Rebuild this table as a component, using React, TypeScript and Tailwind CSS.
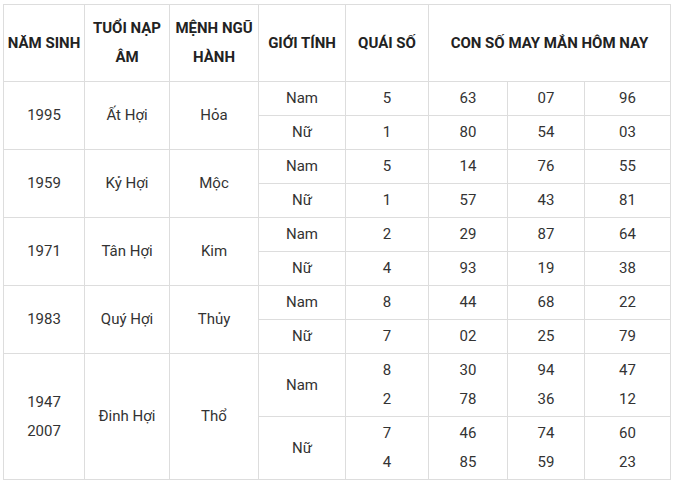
import React from "react";

type Row = { g: string; q: string[]; n: string[][] };
type Group = { year: string[]; tuoi: string; menh: string; rows: Row[]; tall?: boolean };

const data: Group[] = [
  { year: ["1995"], tuoi: "Ất Hợi", menh: "Hỏa", rows: [
    { g: "Nam", q: ["5"], n: [["63"], ["07"], ["96"]] },
    { g: "Nữ", q: ["1"], n: [["80"], ["54"], ["03"]] },
  ] },
  { year: ["1959"], tuoi: "Kỷ Hợi", menh: "Mộc", rows: [
    { g: "Nam", q: ["5"], n: [["14"], ["76"], ["55"]] },
    { g: "Nữ", q: ["1"], n: [["57"], ["43"], ["81"]] },
  ] },
  { year: ["1971"], tuoi: "Tân Hợi", menh: "Kim", rows: [
    { g: "Nam", q: ["2"], n: [["29"], ["87"], ["64"]] },
    { g: "Nữ", q: ["4"], n: [["93"], ["19"], ["38"]] },
  ] },
  { year: ["1983"], tuoi: "Quý Hợi", menh: "Thủy", rows: [
    { g: "Nam", q: ["8"], n: [["44"], ["68"], ["22"]] },
    { g: "Nữ", q: ["7"], n: [["02"], ["25"], ["79"]] },
  ] },
  { year: ["1947", "2007"], tuoi: "Đinh Hợi", menh: "Thổ", tall: true, rows: [
    { g: "Nam", q: ["8", "2"], n: [["30", "78"], ["94", "36"], ["47", "12"]] },
    { g: "Nữ", q: ["7", "4"], n: [["46", "85"], ["74", "59"], ["60", "23"]] },
  ] },
];

const td = "border border-[#dddddd] text-center align-middle p-0";

function Lines({ items }: { items: string[] }) {
  return (
    <div className="flex flex-col items-center leading-[29px]">
      {items.map((t, i) => (
        <span key={i}>{t}</span>
      ))}
    </div>
  );
}

export default function App() {
  return (
    <div className="w-[680px] h-[487px] bg-white pt-[4px] pl-[3px]" style={{ fontFamily: "Roboto, 'Liberation Sans', sans-serif" }}>
      <table className="border-collapse table-fixed w-[667px] text-[15px] text-[#333333]">
        <colgroup>
          <col className="w-[81px]" />
          <col className="w-[85px]" />
          <col className="w-[89px]" />
          <col className="w-[87px]" />
          <col className="w-[83px]" />
          <col className="w-[79px]" />
          <col className="w-[77px]" />
          <col className="w-[86px]" />
        </colgroup>
        <thead>
          <tr className="h-[77px]">
            <th className={`${td} font-bold leading-[29px] text-[#222222]`}>NĂM SINH</th>
            <th className={`${td} font-bold leading-[29px] text-[#222222]`}>TUỔI NẠP<br />ÂM</th>
            <th className={`${td} font-bold leading-[29px] text-[#222222]`}>MỆNH NGŨ<br />HÀNH</th>
            <th className={`${td} font-bold leading-[29px] text-[#222222]`}>GIỚI TÍNH</th>
            <th className={`${td} font-bold leading-[29px] text-[#222222]`}>QUÁI SỐ</th>
            <th colSpan={3} className={`${td} font-bold leading-[29px] text-[#222222]`}>CON SỐ MAY MẮN HÔM NAY</th>
          </tr>
        </thead>
        <tbody>
          {data.map((grp, gi) =>
            grp.rows.map((r, ri) => (
              <tr key={`${gi}-${ri}`} className={grp.tall ? "h-[63px]" : "h-[34px]"}>
                {ri === 0 && (
                  <>
                    <td rowSpan={2} className={td}><Lines items={grp.year} /></td>
                    <td rowSpan={2} className={td}>{grp.tuoi}</td>
                    <td rowSpan={2} className={td}>{grp.menh}</td>
                  </>
                )}
                <td className={td}>{r.g}</td>
                <td className={td}><Lines items={r.q} /></td>
                {r.n.map((c, ci) => (
                  <td key={ci} className={td}><Lines items={c} /></td>
                ))}
              </tr>
            ))
          )}
        </tbody>
      </table>
    </div>
  );
}
